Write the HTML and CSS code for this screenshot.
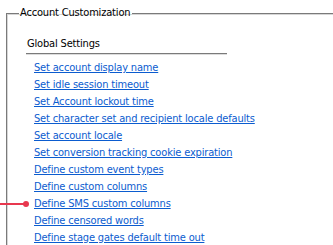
FILE: index.html
```html
<!DOCTYPE html>
<html lang="en">
<head>
<meta charset="utf-8">
<title>Account Customization</title>
<link rel="stylesheet" href="styles.css">
</head>
<body>
<div class="page">
  <fieldset class="group">
    <legend class="group-title">Account Customization</legend>
    <div class="section">
      <div class="section-title">Global Settings</div>
      <ul class="links">
        <li><a href="#">Set account display name</a></li>
        <li><a href="#">Set idle session timeout</a></li>
        <li><a href="#">Set Account lockout time</a></li>
        <li><a href="#">Set character set and recipient locale defaults</a></li>
        <li><a href="#">Set account locale</a></li>
        <li><a href="#">Set conversion tracking cookie expiration</a></li>
        <li><a href="#">Define custom event types</a></li>
        <li><a href="#">Define custom columns</a></li>
        <li class="marked"><a href="#">Define SMS custom columns</a></li>
        <li><a href="#">Define censored words</a></li>
        <li><a href="#">Define stage gates default time out</a></li>
      </ul>
    </div>
  </fieldset>
  <div class="pointer"><span class="pointer-dot"></span></div>
</div>
</body>
</html>
```
FILE: styles.css
```css
html, body {
  margin: 0;
  padding: 0;
  background: #ffffff;
}
body {
  font-family: "DejaVu Sans Condensed", "DejaVu Sans", sans-serif;
  font-size: 11px;
  letter-spacing: -0.17px;
  color: #000;
  overflow: hidden;
}
.page {
  position: relative;
  padding-top: 6px;
}
.group {
  margin: 0 0 0 6px;
  padding: 10px 0 40px 12px;
  border: 0;
  border-top: 1px solid #7a7a7a;
  border-left: 1px solid #7a7a7a;
  box-shadow: inset 1px 1px 0 #d6d6d6;
  min-width: 0;
}
.group-title {
  padding: 0 2px 0 1px;
  margin-left: 0;
  line-height: 14px;
  color: #000;
}
.section {
  width: 201px;
  margin-left: 7px;
}
.section-title {
  line-height: 14px;
  padding: 7px 0 2px 1px;
  border-bottom: 1px solid #7a7a7a;
  box-shadow: 0 1px 0 #dcdcdc;
  margin-bottom: 5px;
}
.links {
  list-style: none;
  margin: 0;
  padding: 0 0 0 8px;
}
.links li {
  line-height: 17px;
  white-space: nowrap;
}
.links a {
  color: #0b5ccf;
  text-decoration: underline;
}
.pointer {
  position: absolute;
  left: 0;
  top: 203px;
  width: 26px;
  height: 2px;
  background: #e8384f;
}
.pointer-dot {
  position: absolute;
  right: -3px;
  top: -2px;
  width: 6px;
  height: 6px;
  border-radius: 50%;
  background: #e8384f;
}
```
